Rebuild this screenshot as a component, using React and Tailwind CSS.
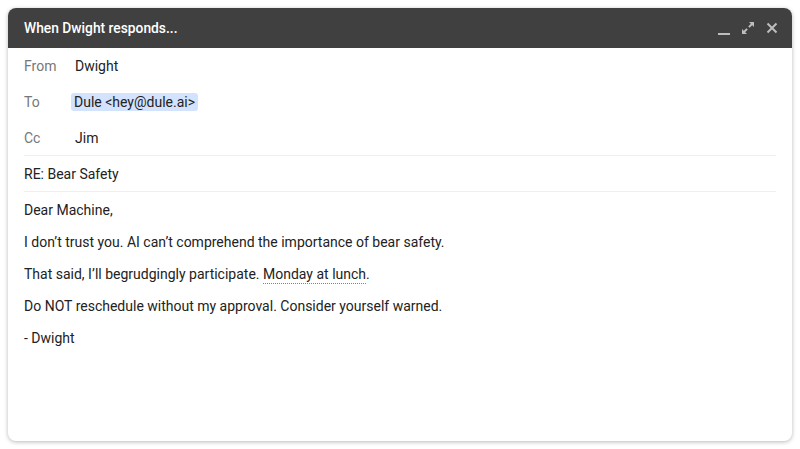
export default function App() {
  return (
    <div className="w-[800px] h-[449px] bg-white p-2" style={{ fontFamily: "Roboto, 'Liberation Sans', sans-serif" }}>
      <div className="h-[433px] w-[784px] rounded-lg bg-white shadow-[0_1px_4px_rgba(0,0,0,0.28)] overflow-hidden flex flex-col">
        <div className="h-10 bg-[#404040] flex items-center justify-between pl-4 pr-[14px]">
          <div className="text-white text-[13.8px] font-medium">When Dwight responds...</div>
          <div className="flex items-center gap-[12px] text-[#bdbdbd]">
            <svg width="12" height="12" viewBox="0 0 12 12" className="mt-[6px]">
              <rect x="0" y="8" width="12" height="2" fill="currentColor" />
            </svg>
            <svg width="12" height="12" viewBox="0 0 12 12">
              <path d="M7 0h5v5l-1.8-1.8-2.6 2.6-1.4-1.4 2.6-2.6zM0 7l1.8 1.8 2.6-2.6 1.4 1.4-2.6 2.6L5 12H0z" fill="currentColor" />
            </svg>
            <svg width="12" height="12" viewBox="0 0 12 12">
              <path d="M1.5 1.5l9 9M10.5 1.5l-9 9" stroke="currentColor" strokeWidth="2" />
            </svg>
          </div>
        </div>
        <div className="px-4 text-[14px] text-[#222]">
          <div className="h-9 flex items-center">
            <span className="w-[51px] text-[#777]">From</span>
            <span>Dwight</span>
          </div>
          <div className="h-9 flex items-center">
            <span className="w-[47px] text-[#777]">To</span>
            <span className="bg-[#d3e3fd] rounded-[3px] px-[3px] leading-[18px]">Dule &lt;hey@dule.ai&gt;</span>
          </div>
          <div className="h-9 flex items-center border-b border-[#efefef] pt-px">
            <span className="w-[51px] text-[#777]">Cc</span>
            <span>Jim</span>
          </div>
          <div className="h-9 flex items-center border-b border-[#efefef] pt-px">RE: Bear Safety</div>
          <div className="pt-[2px]">
            <p className="h-8 leading-8">Dear Machine,</p>
            <p className="h-8 leading-8">I don’t trust you. AI can’t comprehend the importance of bear safety.</p>
            <p className="h-8 leading-8">
              That said, I’ll begrudgingly participate.{" "}
              <span className="inline-block leading-[18px] border-b border-dotted border-[#4a8af4]">Monday at lunch</span>.
            </p>
            <p className="h-8 leading-8">Do NOT reschedule without my approval. Consider yourself warned.</p>
            <p className="h-8 leading-8">- Dwight</p>
          </div>
        </div>
      </div>
    </div>
  );
}
